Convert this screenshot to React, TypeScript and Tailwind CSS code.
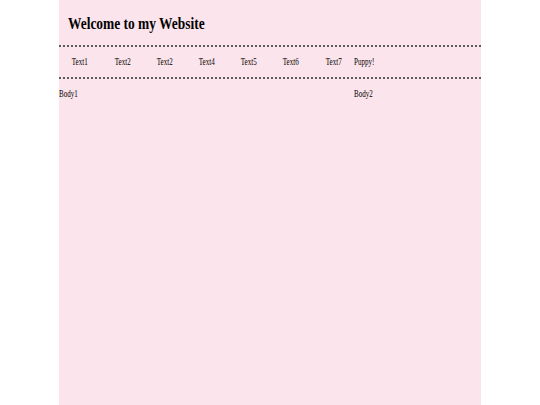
import React from "react";

const navItems = ["Text1", "Text2", "Text2", "Text4", "Text5", "Text6", "Text7"];

function Dashed() {
  return (
    <div className="h-[2px] w-full bg-[repeating-linear-gradient(90deg,#5b5b5b_0px,#5b5b5b_2.5px,transparent_2.5px,transparent_4px)]" />
  );
}

export default function App() {
  return (
    <div className="min-h-screen bg-white font-['Liberation_Serif','Times_New_Roman',serif] text-black">
      <div className="mx-auto w-[422px] min-h-[405px] bg-[#fce4ec]">
        <header className="h-[45px] pl-[9px] pt-[12px]">
          <h1 className="inline-block origin-left scale-x-[0.79] whitespace-nowrap text-[17px] font-bold leading-[20px]">
            Welcome to my Website
          </h1>
        </header>
        <Dashed />
        <nav className="flex h-[30px] items-center text-[9.5px] leading-[11px]">
          <div className="grid w-[70%] grid-cols-7">
            {navItems.map((t, i) => (
              <div key={i} className="flex justify-center">
                <span className="inline-block scale-x-[0.74] whitespace-nowrap">{t}</span>
              </div>
            ))}
          </div>
          <div className="w-[30%]">
            <span className="inline-block origin-left scale-x-[0.74] whitespace-nowrap">Puppy!</span>
          </div>
        </nav>
        <Dashed />
        <main className="flex pt-[10px] text-[9.5px] leading-[11px]">
          <div className="w-[70%]">
            <span className="inline-block origin-left scale-x-[0.74]">Body1</span>
          </div>
          <div className="w-[30%]">
            <span className="inline-block origin-left scale-x-[0.74]">Body2</span>
          </div>
        </main>
      </div>
    </div>
  );
}
